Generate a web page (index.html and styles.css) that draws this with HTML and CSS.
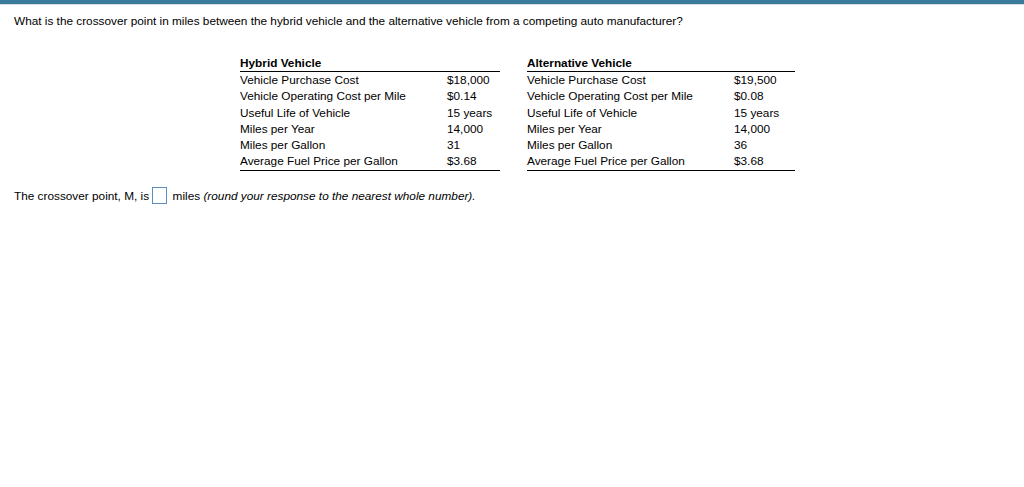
FILE: index.html
```html
<!DOCTYPE html>
<html>
<head>
<meta charset="utf-8">
<link rel="stylesheet" href="styles.css">
</head>
<body>
<div class="topbar"></div>
<div class="content">
  <p class="question">What is the crossover point in miles between the hybrid vehicle and the alternative vehicle from a competing auto manufacturer?</p>
  <div class="tables">
    <table class="data hybrid">
      <thead><tr><th colspan="2">Hybrid Vehicle</th></tr></thead>
      <tbody>
        <tr><td class="label">Vehicle Purchase Cost</td><td class="val">$18,000</td></tr>
        <tr><td class="label">Vehicle Operating Cost per Mile</td><td class="val">$0.14</td></tr>
        <tr><td class="label">Useful Life of Vehicle</td><td class="val">15 years</td></tr>
        <tr><td class="label">Miles per Year</td><td class="val">14,000</td></tr>
        <tr><td class="label">Miles per Gallon</td><td class="val">31</td></tr>
        <tr><td class="label">Average Fuel Price per Gallon</td><td class="val">$3.68</td></tr>
      </tbody>
    </table>
    <table class="data alt">
      <thead><tr><th colspan="2">Alternative Vehicle</th></tr></thead>
      <tbody>
        <tr><td class="label">Vehicle Purchase Cost</td><td class="val">$19,500</td></tr>
        <tr><td class="label">Vehicle Operating Cost per Mile</td><td class="val">$0.08</td></tr>
        <tr><td class="label">Useful Life of Vehicle</td><td class="val">15 years</td></tr>
        <tr><td class="label">Miles per Year</td><td class="val">14,000</td></tr>
        <tr><td class="label">Miles per Gallon</td><td class="val">36</td></tr>
        <tr><td class="label">Average Fuel Price per Gallon</td><td class="val">$3.68</td></tr>
      </tbody>
    </table>
  </div>
  <p class="answer">The crossover point, M, is <span class="box"></span> miles <em>(round your response to the nearest whole number).</em></p>
</div>
</body>
</html>
```
FILE: styles.css
```css
html, body {
  margin: 0;
  padding: 0;
  background: #ffffff;
}
body {
  font-family: "Liberation Sans", Arial, sans-serif;
  font-size: 11.8px;
  color: #000;
}
.topbar {
  height: 4px;
  background: #3a7a9b;
  border-bottom: 1px solid #d9dde2;
}
.content {
  padding: 0 14px;
}
.question {
  margin: 9px 0 0 0;
  line-height: 14px;
}
.tables {
  display: flex;
  margin: 29px 0 0 226px;
  gap: 27px;
}
.data {
  border-collapse: collapse;
}
.data th {
  text-align: left;
  font-weight: bold;
  padding: 0 0 1px 0;
  line-height: 13px;
  border-bottom: 1px solid #000;
}
.data td {
  padding: 0;
  line-height: 16.3px;
}
.data tbody tr:last-child td {
  border-bottom: 1px solid #000;
}
.data td.label {
  width: 207px;
}
.hybrid td.val { width: 53px; }
.alt td.label { width: 207px; }
.alt td.val { width: 61px; }
.answer {
  margin: 16px 0 0 0;
  line-height: 18px;
}
.box {
  display: inline-block;
  width: 13px;
  height: 15px;
  border: 1px solid #5a8fbf;
  vertical-align: middle;
  margin: -2px 2px 0 0;
}
```
